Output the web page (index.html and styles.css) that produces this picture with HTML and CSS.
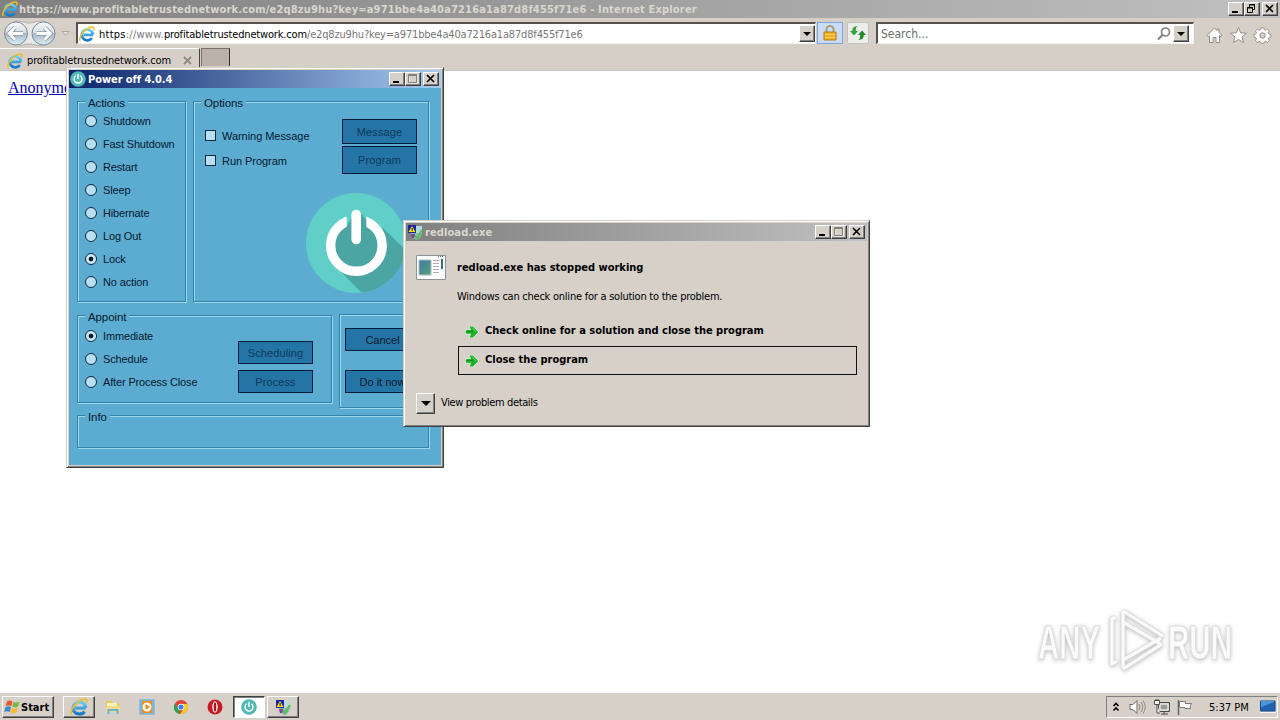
FILE: index.html
```html
<!DOCTYPE html>
<html lang="en">
<head>
<meta charset="utf-8">
<title>Desktop</title>
<link rel="stylesheet" href="styles.css">
</head>
<body>
<svg width="0" height="0" class="defs">
  <defs>
    <linearGradient id="ieb" x1="0" y1="0" x2="0" y2="1"><stop offset="0" stop-color="#69d0f8"/><stop offset="1" stop-color="#1677c8"/></linearGradient>
    <linearGradient id="orb" x1="0" y1="0" x2="0" y2="1"><stop offset="0" stop-color="#f8fafb"/><stop offset=".48" stop-color="#d5dce2"/><stop offset=".5" stop-color="#aab8c3"/><stop offset="1" stop-color="#d9edf6"/></linearGradient>
    <symbol id="ie" viewBox="0 0 16 16">
      <path d="M14 8.800H4.500M13.900 8.700A5.600 5.400 0 1 0 12.900 12" fill="none" stroke="url(#ieb)" stroke-width="2.700"/>
      <path d="M1.200 14.800C-.8 11.800 5.200 3.200 11.500 1.300c3.200-1 4.200.6 3 3" fill="none" stroke="#efbd25" stroke-width="1.500"/>
    </symbol>
    <symbol id="pow" viewBox="0 0 16 16">
      <circle cx="8" cy="8" r="7.800" fill="#51b9b4"/><path d="M5.600 4.800a4 4 0 1 0 4.800 0M8 3v5" fill="none" stroke="#fff" stroke-width="1.400"/>
    </symbol>
    <symbol id="wer" viewBox="0 0 16 16">
      <path d="M1 1h8v8H1z" fill="#1c28a0"/><path d="M9 2h6v8H9z" fill="#b8dbe0"/><path d="M5 2l3.500 6h-7z" fill="#ffe11a"/><path d="M4.600 4h1v3h-1z" fill="#111"/>
      <path d="M4 9h11l-2 5-3 2-5-2z" fill="#8fb9b0"/><path d="M6 10l4 4 5-8" fill="none" stroke="#53c152" stroke-width="2.200"/><path d="M4 10h4l-1 4H5z" fill="#8b3ba8"/>
    </symbol>
    <symbol id="arrow" viewBox="0 0 14 14">
      <path d="M.8 5.200h5.500L4.500 1.500H8L13.200 7 8 12.500H4.500l1.800-3.700H.8z" fill="#1cb02a" stroke="#e2f4da" stroke-width="1.200" paint-order="stroke"/><path d="M2 6.200h6" fill="none" stroke="#127c1d"/><path d="M7 2.500L11 7" stroke="#5ddf66"/>
    </symbol>
    <symbol id="min" viewBox="0 0 15 13"><path d="M4 9h6v2H4z" fill="#000"/></symbol>
    <symbol id="maxd" viewBox="0 0 15 13"><path d="M4 3h8v8H4z" fill="none" stroke="#fff"/><path d="M3.500 2.500h8v8h-8zM3 3.500h9" fill="none" stroke="#848078"/></symbol>
    <symbol id="rest" viewBox="0 0 15 13"><path d="M5.500 5V2.500h5v5H9M5 3h6M3.500 5.500h5v5h-5zM3 6h6" fill="none" stroke="#000"/></symbol>
    <symbol id="cls" viewBox="0 0 15 13"><path d="M4 3l7 7M11 3l-7 7" stroke="#000" stroke-width="1.700"/></symbol>
  </defs>
</svg>

<div class="browser">
  <div class="caption main">
    <svg class="i16"><use href="#ie"/></svg>
    <span class="t cap-main">https://www.profitabletrustednetwork.com/e2q8zu9hu?key=a971bbe4a40a7216a1a87d8f455f71e6 - Internet Explorer</span>
    <span class="wb"><svg><use href="#min"/></svg></span><span class="wb"><svg><use href="#rest"/></svg></span><span class="wb x"><svg><use href="#cls"/></svg></span>
  </div>
  <div class="nav">
    <svg class="orbs" width="78" height="28" viewBox="0 0 78 28">
      <path d="M16 1C22 1 25 3 29 3S37 1 43 1a13 13 0 0 1 0 25c-6 0-9-2-14-2s-7 2-13 2A13 13 0 0 1 16 1z" fill="#e8e8e6" stroke="#b4b1ad"/>
      <circle cx="16" cy="13.500" r="11.500" fill="url(#orb)" stroke="#7c8b99"/><circle cx="43.500" cy="13.500" r="11.500" fill="url(#orb)" stroke="#7c8b99"/>
      <path d="M23 13.500H10M15 7.500l-6 6 6 6M36.500 13.500h13M44.500 7.500l6 6-6 6" fill="none" stroke="#8798a6" stroke-width="4.400"/>
      <path d="M23 13.500H10M15 7.500l-6 6 6 6M36.500 13.500h13M44.500 7.500l6 6-6 6" fill="none" stroke="#fff" stroke-width="2.800"/>
      <path d="M62 11.500h7l-3.500 4z" fill="#e6e3dd" stroke="#aaa69f"/>
    </svg>
    <div class="field addr">
      <svg class="i16"><use href="#ie"/></svg>
      <span class="t url"><span class="scheme"><b>https</b>://www.</span><b class="dom">profitabletrustednetwork.com</b><span class="path">/e2q8zu9hu?key=a971bbe4a40a7216a1a87d8f455f71e6</span></span>
      <span class="drop"></span>
    </div>
    <span class="tool lock"><svg width="16" height="18" viewBox="0 0 16 18"><path d="M4.500 9V5.500a3.500 3.500 0 0 1 7 0V9" fill="none" stroke="#a9a075" stroke-width="2"/><path d="M2 8h12v8H2z" fill="#eeb022" stroke="#b97d13"/><path d="M3 10.500h10M3 13.500h10" stroke="#ffd768"/></svg></span>
    <span class="tool refr"><svg width="18" height="18" viewBox="0 0 18 18"><path d="M9 2.500C7 2.500 6.800 4.500 6.800 7H9l-4 4.500L1 7h2.300C3 4 5 1.500 9 2.500z" fill="#36a03c"/><path d="M9 15.500c2 0 2.200-2 2.200-4.500H9l4-4.500L17 11h-2.300c.3 3-1.700 5.500-5.700 4.500z" fill="#24882c"/></svg></span>
    <div class="field search"><span class="t srch">Search...</span>
      <svg class="mag" width="14" height="14" viewBox="0 0 14 14"><circle cx="8.500" cy="5" r="4" fill="none" stroke="#85827e" stroke-width="1.700"/><path d="M5.500 8L1 12.500" stroke="#85827e" stroke-width="2.200"/></svg>
      <span class="drop"></span></div>
    <svg class="cmds" width="70" height="18" viewBox="0 0 70 18" fill="#fff" stroke="#918d87">
      <path d="M1 9.500L8.500 2l2.500 2.500V3h2v3.500l3 3-1.500 1L13.500 9.500V16.500H10v-5H7v5H3.500V9.500l-1.200 1.200z"/>
      <path d="M32.500 1.500l2.200 5.300 5.800.4-4.400 3.700 1.400 5.600-5-3-5 3 1.400-5.600-4.400-3.700 5.800-.4z"/>
      <path d="M55.500 1.500h3l.5 2 1.500.6 1.900-1.100 2 2-1.100 1.900.7 1.500 2 .6v3l-2 .5-.7 1.500 1.100 1.900-2 2-1.900-1.100-1.500.6-.5 2h-3l-.5-2-1.500-.6-1.900 1.100-2-2 1.100-1.900-.7-1.500-2-.5V9l2-.6.7-1.500L49.600 5l2-2 1.900 1.100 1.500-.6z" transform="translate(2.800 .6) scale(.94 .88)"/><circle cx="56.500" cy="9.500" r="2.700" fill="#d5cfc8"/>
    </svg>
  </div>
  <div class="tabs">
    <div class="tab"><svg class="i16"><use href="#ie"/></svg><span class="t tabt">profitabletrustednetwork.com</span><svg width="9" height="9" viewBox="0 0 9 9"><path d="M1 1l7 7M8 1l-7 7" stroke="#8d8985" stroke-width="1.800"/></svg></div>
    <div class="newtab"></div>
  </div>
  <main><a class="link">Anonymous</a></main>
  <svg class="mark" width="220" height="76" viewBox="0 0 220 76">
    <g fill="#fbfbfb" stroke="#dedede" stroke-width="1">
      <text x="8" y="57" font-size="49" textLength="62" lengthAdjust="spacingAndGlyphs">ANY</text>
      <text x="138" y="57" font-size="49" textLength="64" lengthAdjust="spacingAndGlyphs">RUN</text>
    </g>
    <g fill="none" stroke-linejoin="round"><path d="M86 16h-4v46l5-3M93 9v11l38 22M93 9l40 25M93 20v38l38-22M93 66V56M93 67l39-25" stroke="#d9d9d9" stroke-width="4.600"/><path d="M86 16h-4v46l5-3M93 9v11l38 22M93 9l40 25M93 20v38l38-22M93 66V56M93 67l39-25" stroke="#fafafa" stroke-width="3.200"/></g>
  </svg>
</div>

<section class="window power">
  <div class="caption blue"><svg class="i16"><use href="#pow"/></svg><span class="t cap-pow">Power off 4.0.4</span>
    <span class="wb"><svg><use href="#min"/></svg></span><span class="wb"><svg><use href="#maxd"/></svg></span><span class="wb x"><svg><use href="#cls"/></svg></span></div>
  <div class="pbody">
    <div class="row top">
      <div class="group actions"><span class="legend">Actions</span>
        <label><i></i>Shutdown</label><label><i></i>Fast Shutdown</label><label><i></i>Restart</label><label><i></i>Sleep</label><label><i></i>Hibernate</label><label><i></i>Log Out</label><label><i class="on"></i>Lock</label><label><i></i>No action</label>
      </div>
      <div class="group options"><span class="legend">Options</span>
        <div class="optrow"><div class="checks"><label><i class="sq"></i>Warning Message</label><label><i class="sq"></i>Run Program</label></div>
          <div class="btns"><span class="btn off m">Message</span><span class="btn off p">Program</span></div></div>
        <svg class="big" width="100" height="100" viewBox="0 0 100 100">
          <defs><clipPath id="c"><circle cx="50" cy="50" r="50"/></clipPath><mask id="gap"><path d="M0 0h100v100H0z" fill="#fff"/><path d="M40.700 10h19.600v25H40.700z" fill="#000"/></mask></defs>
          <circle cx="50" cy="50" r="50" fill="#5fcfc8"/>
          <g clip-path="url(#c)"><path d="M54 20L60 26 78 36 110 67V120H76L38 82 28 66 26 50 32 38 41 33 46 24z" fill="#4ba5a2"/></g>
          <circle cx="50.400" cy="52.500" r="25.800" fill="none" stroke="#fff" stroke-width="9.400" mask="url(#gap)"/><path d="M50.200 21.500v25" stroke="#fff" stroke-width="9.600" stroke-linecap="round"/>
        </svg>
      </div>
    </div>
    <div class="row mid">
      <div class="group appoint"><span class="legend">Appoint</span>
        <div class="radios"><label><i class="on"></i>Immediate</label><label><i></i>Schedule</label><label><i></i>After Process Close</label></div>
        <div class="btns"><span class="btn off">Scheduling</span><span class="btn off">Process</span></div>
      </div>
      <div class="group run"><span class="btn">Cancel</span><span class="btn">Do it now</span></div>
    </div>
    <div class="group info"><span class="legend">Info</span></div>
  </div>
</section>

<section class="window crash">
  <div class="caption grey"><svg class="i16"><use href="#wer"/></svg><span class="t cap-red">redload.exe</span>
    <span class="wb"><svg><use href="#min"/></svg></span><span class="wb"><svg><use href="#maxd"/></svg></span><span class="wb x"><svg><use href="#cls"/></svg></span></div>
  <div class="cbody">
    <svg class="app" width="32" height="27" viewBox="0 0 32 27"><defs><linearGradient id="pic" x1="0" y1="0" x2="1" y2="1"><stop offset="0" stop-color="#4276a7"/><stop offset="1" stop-color="#58a27b"/></linearGradient></defs>
      <path d="M1.500 1.500h29v24h-29z" fill="#fcfdfd" stroke="#8e9291"/><path d="M4 6h12v15H4z" fill="url(#pic)" stroke="#a9bec1"/><path d="M18 6.500h6M18 9.500h6M18 12.500h6M18 15.500h6M18 18.500h6" stroke="#bba8ac"/><path d="M26 5h2v10h-2z" fill="#397176"/><path d="M23 2.500h6" stroke="#49708a" stroke-dasharray="1 1"/></svg>
    <div class="msg">
      <span class="t h1">redload.exe has stopped working</span>
      <span class="t p1">Windows can check online for a solution to the problem.</span>
      <div class="cmd"><svg width="14" height="14"><use href="#arrow"/></svg><span class="t c1">Check online for a solution and close the program</span></div>
      <div class="cmd focus"><svg width="14" height="14"><use href="#arrow"/></svg><span class="t c2">Close the program</span></div>
    </div>
    <div class="details"><span class="drop"></span><span class="t vd">View problem details</span></div>
  </div>
</section>

<footer class="taskbar">
  <div class="start"><svg width="17" height="16" viewBox="0 0 17 16"><path d="M3 2.500Q6 .5 8.500 2.500L7.200 7.200Q4.500 5.500 1.700 7z" fill="#e8562c"/><path d="M9.500 3Q12.500 4.500 15.500 2.500L14 7.500Q11 9 8.200 7.500z" fill="#78b943"/><path d="M1.500 8.200Q4.500 6.500 7 8.300L5.600 13Q3 11.500.2 13z" fill="#3988d0"/><path d="M8 8.700Q10.500 10.300 13.700 8.700L12.400 13.300Q9.500 15 6.500 13.300z" fill="#f8bc28"/></svg><span class="t st">Start</span></div>
  <div class="task"><svg width="18" height="18"><use href="#ie"/></svg></div>
  <div class="task flat"><svg width="16" height="16" viewBox="0 0 16 16"><path d="M1 2h6l1 2h6v9H1z" fill="#e8c75f"/><path d="M2 4h10v3H2z" fill="#f9f2bc"/><path d="M1 7h14v6H1z" fill="#f5dc83"/><path d="M3.500 15v-4h9v4" fill="none" stroke="#65b1d9" stroke-width="2"/></svg></div>
  <div class="task flat"><svg width="16" height="16" viewBox="0 0 16 16"><path d="M.5.5h15v15H.5z" fill="#73b8e2" stroke="#9fb9c5"/><path d="M3 2h10v12H3z" fill="#f28a17"/><circle cx="8" cy="8" r="4.500" fill="#fff"/><path d="M6.500 5l4.500 3-4.500 3z" fill="#f28a17"/></svg></div>
  <div class="task flat"><svg width="14" height="14" viewBox="0 0 16 16"><circle cx="8" cy="8" r="8" fill="#e34133"/><path d="M1 4l5 7 1 5A8 8 0 0 1 1 4z" fill="#2ba252"/><path d="M8 4.500h7.200A8 8 0 0 1 7 16l4-6z" fill="#fbc926"/><circle cx="8" cy="8" r="3.800" fill="#fff"/><circle cx="8" cy="8" r="2.900" fill="#3d7ee8"/></svg></div>
  <div class="task flat"><svg width="16" height="16" viewBox="0 0 16 16"><circle cx="8" cy="8" r="7.500" fill="#c91922"/><ellipse cx="8" cy="8" rx="2.700" ry="5.700" fill="#fff"/><ellipse cx="8" cy="8" rx="1.300" ry="4.800" fill="#b1121c"/></svg></div>
  <div class="task active"><svg width="16" height="16"><use href="#pow"/></svg></div>
  <div class="task"><svg width="16" height="16"><use href="#wer"/></svg></div>
  <div class="tray">
    <svg width="8" height="10" viewBox="0 0 8 10"><path d="M1.500 4L4 1.500 6.500 4M1.500 8.500L4 6l2.500 2.500" fill="none" stroke="#000" stroke-width="1.600"/></svg>
    <svg class="vol" width="17" height="16" viewBox="0 0 17 16"><path d="M1 5.500h3l4-4v13l-4-4H1z" fill="#fff" stroke="#6c6a67"/><path d="M10 5q2 3 0 6M12 3q3.500 5 0 10M14 1.500q4.500 6.500 0 13" fill="none" stroke="#8d8985"/></svg>
    <svg class="net" width="16" height="16" viewBox="0 0 16 16"><path d="M4.500 3.500h11v9h-11zM7 15h7M10 12.500v3" fill="#b7b4af" stroke="#4d4b49"/><path d="M6 5h8v6H6z" fill="#9c9a97" stroke="#fff"/><path d="M.5 1.500h5v4h-5zM2 0v2M4 0v2M3 6v8h3" fill="#fff" stroke="#4d4b49"/></svg>
    <svg class="flag" width="16" height="16" viewBox="0 0 16 16"><path d="M1.500 1v15" stroke="#666" stroke-width="1.500"/><path d="M2.500 2.500h6v2h6l-1.500 3 .5 2H8V8.500H2.500z" fill="#fff" stroke="#777"/></svg>
    <span class="t clock">5:37 PM</span>
    <svg class="desk" width="16" height="14" viewBox="0 0 16 14"><path d="M.5 1h14.500v10H.5z" fill="#2163b0" stroke="#174887"/><path d="M1 7L14 2v-1H1z" fill="#4e97d8"/><path d="M0 12.500h16" stroke="#edf3f7"/></svg>
  </div>
</footer>
</body>
</html>
```
FILE: styles.css
```css
* { box-sizing: border-box; }
body { margin: 0; width: 1280px; height: 720px; overflow: hidden; display: flex; flex-direction: column; background: #fff; color: #000; font: 11px "DejaVu Sans Condensed", "DejaVu Sans", sans-serif; }
svg { display: block; flex: none; }
.defs { position: absolute; }
.t { white-space: nowrap; }
.i16 { width: 16px; height: 16px; }

.browser { height: 692px; position: relative; background: #d5cfc8; display: flex; flex-direction: column; }
.caption { height: 18px; display: flex; align-items: center; gap: 1px; padding: 0 2px; font-weight: bold; }
.caption .t { flex: 1; }
.main { background: linear-gradient(90deg, #808080, #c0c0c0); color: #d9d6cf; padding-left: 2px; }
.wb { width: 16px; height: 14px; background: #d5d0c8; border: 1px solid; border-color: #fff #404040 #404040 #fff; box-shadow: inset -1px -1px #808080; margin-left: -1px; flex: none; }
.wb svg { width: 15px; height: 13px; margin: -1px 0 0 -1px; }
.wb.x { margin-left: 1px; }
.cap-main { letter-spacing: 0.170px; }

.nav { height: 30px; display: flex; align-items: flex-start; padding-top: 4px; }
.orbs { margin-top: -2px; margin-right: -2px; }
.field { height: 22px; background: #fff; border: 1px solid #f5f3f0; border-top: 2px solid #54514e; border-left: 2px solid #54514e; display: flex; align-items: center; }
.addr { width: 740px; padding-left: 1px; gap: 4px; }
.url { flex: 1; color: #777; padding-top: 1px; }
.url b { font-weight: normal; color: #000; }
.scheme { letter-spacing: 0.250px; }
.dom { letter-spacing: -0.160px; }
.path { letter-spacing: -0.170px; }
.drop { width: 16px; height: 17px; background: #d5d0c8; border: 1px solid; border-color: #fff #404040 #404040 #fff; box-shadow: inset -1px -1px #808080; display: flex; align-items: center; justify-content: center; flex: none; }
.drop::after { content: ""; border: 4px solid transparent; border-top-color: #000; border-bottom: 0; }
.tool { width: 26px; height: 22px; display: flex; align-items: center; justify-content: center; flex: none; }
.lock { border: 1px solid #7ba7dc; background: #c8dcf5; margin-left: 1px; }
.refr { width: 22px; border: 1px solid #c2c2bf; background: #edeeec; border-radius: 2px; margin-left: 4px; }
.search { width: 318px; margin-left: 7px; padding: 0 4px 0 3px; }
.srch { flex: 1; color: #6d6d6d; font-size: 12px; }
.mag { margin-right: 2px; }
.cmds { margin: 4px 0 0 12px; }

.tabs { height: 23px; display: flex; border-bottom: 1px solid #cbc5be; }
.tab { width: 200px; height: 22px; border-top: 1px solid #fff; border-right: 1px solid #444; display: flex; align-items: center; padding: 2px 0 0 7px; gap: 4px; }
.tabt { width: 152px; letter-spacing: -0.130px; }
.newtab { width: 29px; height: 18px; border: 1px solid #77726d; border-width: 1px 1px 0 1px; border-right: 1px solid #333; background: #bcb2aa; margin-left: 1px; }
main { flex: 1; background: #fff; padding: 8px; }
.link { font: 16px/18px "Liberation Serif", serif; color: #0000b0; text-decoration: underline; }
.mark { position: absolute; left: 1030px; top: 602px; filter: drop-shadow(0 1px 2px #bbb); font-family: "Liberation Sans Narrow", "Liberation Sans", sans-serif; font-weight: bold; }

.window { position: absolute; background: #d6d0c8; border: 1px solid; border-color: #d6d0c8 #404040 #404040 #d6d0c8; box-shadow: inset 1px 1px #fff, inset -1px -1px #808080; padding: 2px; }
.power { left: 66px; top: 67px; width: 378px; height: 401px; }
.blue { background: linear-gradient(90deg, #0a246a, #a6caf0); color: #fff; }
.grey { background: linear-gradient(90deg, #808080, #c0c0c0); color: #d9d6cf; }
.window .caption { padding-left: 1px; }
.window .caption .i16 { margin-right: 1px; }
.cap-pow { letter-spacing: -0.060px; }
.cap-red { letter-spacing: 0.100px; }
.pbody { height: 377px; background: #5cacd2; padding: 13px 11px 0 8px; font: 11px "Liberation Sans", Arial, sans-serif; color: #06182d; }
.row { display: flex; }
.group { position: relative; border: 1px solid #3582a8; box-shadow: 1px 1px #9dd9ed, inset 1px 1px #9dd9ed; }
.legend { position: absolute; left: 7px; top: -5px; background: #5cacd2; padding: 0 3px; line-height: 13px; font-size: 11.500px; letter-spacing: -0.100px; }
.group label { display: flex; align-items: center; height: 23px; gap: 6px; white-space: nowrap; letter-spacing: -0.150px; }
.group i { width: 12px; height: 12px; border-radius: 50%; border: 1px solid #10283f; background: #b9e0f0; flex: none; }
.group i.on { background: radial-gradient(circle, #061525 0 2px, #c8ebf5 2.700px); }
.group i.sq { width: 11px; height: 11px; border-radius: 0; }
.actions { width: 109px; height: 201px; padding: 7px 0 0 7px; }
.options { width: 236px; height: 201px; margin-left: 7px; padding: 17px 0 0 11px; }
.optrow { display: flex; justify-content: space-between; }
.checks { padding-top: 5px; }
.checks label { height: 25px; letter-spacing: -0.050px; }
.checks label:first-child { margin-top: -1px; }
.btns { display: flex; flex-direction: column; }
.btn { width: 75px; height: 23px; border: 1px solid #031d38; background: #2475a5; display: flex; align-items: center; justify-content: center; white-space: nowrap; font-size: 11px; }
.off { color: #0b395c; }
.options .btns { margin-right: 11px; gap: 2px; }
.options .btn, .appoint .btn { letter-spacing: 0.100px; }
.m { height: 25px; } .p { height: 28px; }
.big { margin: 19px 0 0 101px; }
.mid { margin-top: 12px; align-items: flex-start; }
.appoint { width: 255px; height: 88px; margin-top: 1px; padding: 8px 18px 0 7px; display: flex; justify-content: space-between; }
.appoint .btns { padding-top: 17px; gap: 6px; }
.run { width: 91px; height: 94px; margin-left: 7px; padding: 13px 0 0 5px; }
.run .btn + .btn { margin-top: 19px; }
.info { width: 352px; height: 33px; margin-top: 7px; }

.crash { left: 403px; top: 220px; width: 467px; height: 207px; }
.cbody { padding: 13px 11px 0 9px; display: grid; grid-template-columns: 42px 400px; }
.msg { display: flex; flex-direction: column; padding-left: 1px; }
.h1 { font-weight: bold; line-height: 14px; margin: 7px 0 0 -1px; }
.p1 { line-height: 14px; margin: 15px 0 13px -1px; letter-spacing: -0.240px; }
.cmd { height: 29px; display: flex; align-items: center; gap: 6px; padding: 0 6px; font-weight: bold; border: 1px solid transparent; margin-bottom: 1px; }
.cmd svg { margin-top: 1px; }
.cmd.focus { border-color: #111; height: 29px; margin-top: -1px; }
.cmd .t { margin-bottom: 3px; }
.details { grid-column: 1 / 3; display: flex; gap: 6px; margin-top: 17px; padding-left: 1px; }
.details .drop { width: 19px; height: 21px; }
.details .drop::after { border-width: 5px 5px 0; }
.vd { margin-top: 3px; letter-spacing: -0.360px; }

.taskbar { height: 28px; border-top: 1px solid #fff; box-shadow: 0 -1px #d6d0c8; background: #d6d0c8; display: flex; align-items: flex-start; padding: 3px 2px 0; }
.start, .task { height: 22px; border: 1px solid; border-color: #fff #404040 #404040 #fff; box-shadow: inset -1px -1px #808080; display: flex; align-items: center; }
.start { width: 52px; font-weight: bold; gap: 0; margin-right: 9px; padding-left: 1px; }
.task { width: 32px; justify-content: center; margin-right: 2px; }
.flat { border-color: transparent; box-shadow: none; }
.active { background: #fff; border-color: #404040 #fff #fff #404040; box-shadow: inset 1px 1px #808080; }
.tray { margin-left: auto; width: 172px; height: 22px; border: 1px solid; border-color: #808080 #fff #fff #808080; display: flex; align-items: center; padding-left: 5px; }
.vol { margin-left: 9px; } .net { margin-left: 8px; } .flag { margin-left: 7px; }
.clock { margin-left: 16px; width: 51px; }
```
